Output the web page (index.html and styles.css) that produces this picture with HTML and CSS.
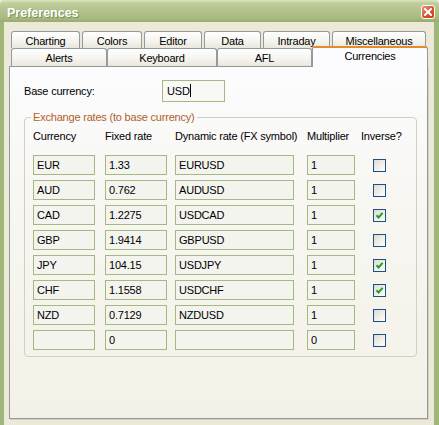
FILE: index.html
```html
<!DOCTYPE html>
<html lang="en">
<head>
    <meta charset="UTF-8">
    <title>Preferences</title>
    <link rel="stylesheet" href="styles.css">
</head>
<body>
    <div class="window">
        <div class="titlebar">
            <span class="title">Preferences</span>
            <span class="close">
                <svg width="8" height="8" viewBox="0 0 8 8"><path d="M1 1L7 7M7 1L1 7" stroke="#fff" stroke-width="2" stroke-linecap="square"/></svg>
            </span>
        </div>
        <div class="client">
            <div class="tab-row back">
                <div class="tab t-charting">Charting</div>
                <div class="tab t-colors">Colors</div>
                <div class="tab t-editor">Editor</div>
                <div class="tab t-data">Data</div>
                <div class="tab t-intraday">Intraday</div>
                <div class="tab t-misc">Miscellaneous</div>
            </div>
            <div class="tab-row front">
                <div class="tab t-alerts">Alerts</div>
                <div class="tab t-keyboard">Keyboard</div>
                <div class="tab t-afl">AFL</div>
                <div class="tab selected">Currencies</div>
            </div>
            <div class="page">
                <div class="base-row">
                    <span class="base-label">Base currency:</span>
                    <div class="edit base-edit">USD<span class="caret"></span></div>
                </div>
                <fieldset class="rates">
                    <legend>Exchange rates (to base currency)</legend>
                    <div class="rate-grid">
                        <span class="head">Currency</span>
                        <span class="head">Fixed rate</span>
                        <span class="head">Dynamic rate (FX symbol)</span>
                        <span class="head">Multiplier</span>
                        <span class="head">Inverse?</span>

                        <div class="edit cur">EUR</div><div class="edit fix">1.33</div><div class="edit dyn">EURUSD</div><div class="edit mul">1</div><span class="check"></span>
                        <div class="edit cur">AUD</div><div class="edit fix">0.762</div><div class="edit dyn">AUDUSD</div><div class="edit mul">1</div><span class="check"></span>
                        <div class="edit cur">CAD</div><div class="edit fix">1.2275</div><div class="edit dyn">USDCAD</div><div class="edit mul">1</div><span class="check on"><svg width="11" height="11" viewBox="0 0 11 11"><path d="M2.5 5.2L4.6 7.4L8.6 2.8" fill="none" stroke="#21a121" stroke-width="2"/></svg></span>
                        <div class="edit cur">GBP</div><div class="edit fix">1.9414</div><div class="edit dyn">GBPUSD</div><div class="edit mul">1</div><span class="check"></span>
                        <div class="edit cur">JPY</div><div class="edit fix">104.15</div><div class="edit dyn">USDJPY</div><div class="edit mul">1</div><span class="check on"><svg width="11" height="11" viewBox="0 0 11 11"><path d="M2.5 5.2L4.6 7.4L8.6 2.8" fill="none" stroke="#21a121" stroke-width="2"/></svg></span>
                        <div class="edit cur">CHF</div><div class="edit fix">1.1558</div><div class="edit dyn">USDCHF</div><div class="edit mul">1</div><span class="check on"><svg width="11" height="11" viewBox="0 0 11 11"><path d="M2.5 5.2L4.6 7.4L8.6 2.8" fill="none" stroke="#21a121" stroke-width="2"/></svg></span>
                        <div class="edit cur">NZD</div><div class="edit fix">0.7129</div><div class="edit dyn">NZDUSD</div><div class="edit mul">1</div><span class="check"></span>
                        <div class="edit cur"></div><div class="edit fix">0</div><div class="edit dyn"></div><div class="edit mul">0</div><span class="check"></span>
                    </div>
                </fieldset>
            </div>
        </div>
    </div>
</body>
</html>
```

FILE: styles.css
```css
*{
    box-sizing: border-box;
}
body{
    margin:0;
    background:#ece9d8;
    font-family:"Liberation Sans", Arial, sans-serif;
    font-size:11px;
    letter-spacing:-0.2px;
    color:#000;
}
.window{
    width:439px;
    height:425px;
    overflow:hidden;
    background:#ece9d8;
}
.titlebar{
    height:22px;
    display:flex;
    align-items:center;
    justify-content:space-between;
    padding:0 4px 0 7px;
    border-radius:5px 5px 0 0;
    background:linear-gradient(to bottom,#dce4bf 0%,#c0ce9c 14%,#b4c38d 45%,#aabb82 80%,#97ac70 100%);
}
.title{
    color:#fff;
    font-weight:bold;
    font-size:12.5px;
    letter-spacing:0;
    padding-top:3px;
    text-shadow:1px 1px 0 #7d8d5a;
}
.close{
    width:14px;
    height:14px;
    margin-top:1px;
    display:flex;
    align-items:center;
    justify-content:center;
    border:1px solid #fff;
    border-radius:3px;
    background:linear-gradient(135deg,#eb9a7c 0%,#d9562f 50%,#c4411b 100%);
}
.client{
    height:403px;
    border-left:4px solid #9fb779;
    border-right:5px solid #9fb779;
    padding:9px 6px 0 5px;
}

/* tabs */
.tab-row{
    display:flex;
    padding-left:2px;
}
.tab-row.back{
    height:17px;
    gap:2px;
}
.tab-row.front{
    height:18px;
}
.tab{
    border:1px solid #919b9c;
    border-bottom:none;
    border-radius:3px 3px 0 0;
    background:linear-gradient(to bottom,#ffffff 0%,#f5f4ef 55%,#e9e7dd 100%);
    text-align:center;
    line-height:14px;
    padding-top:2px;
    white-space:nowrap;
}
.t-charting{ width:69px; }
.t-colors{ width:60px; }
.t-editor{ width:58px; }
.t-data{ width:57px; }
.t-intraday{ width:67px; }
.t-misc{ width:94px; }
.t-alerts{ width:96px; }
.t-keyboard{ width:110px; }
.t-afl{ width:95px; }
.tab.selected{
    width:116px;
    height:21px;
    margin-top:-2px;
    position:relative;
    z-index:2;
    border-top:2px solid #e68b2c;
    background:#fcfcfe;
    padding-top:1px;
}

/* page */
.page{
    height:353px;
    border:1px solid #919b9c;
    background:linear-gradient(to bottom,#fcfcfe 0%,#f7f6f1 40%,#f3f1e7 100%);
    box-shadow:1px 1px 0 #d4d0c2;
    padding:13px 10px 0 14px;
}
.base-row{
    display:flex;
    align-items:center;
}
.base-label{
    width:138px;
}
.edit{
    height:20px;
    border:1px solid #a4b883;
    background:#f4f4ef;
    padding:0 0 0 3px;
    line-height:18px;
    white-space:nowrap;
    overflow:hidden;
}
.base-edit{
    width:63px;
    height:22px;
    line-height:20px;
    padding-left:4px;
    background:#f8f8f4;
}
.caret{
    display:inline-block;
    width:1px;
    height:13px;
    background:#000;
    vertical-align:-2px;
}
.rates{
    margin:9px 0 0 0;
    padding:6px 8px 6px 8px;
    border:1px solid #d0d0bf;
    border-radius:4px;
}
.rates legend{
    color:#b0602a;
    padding:0 2px;
    margin-left:-2px;
    line-height:13px;
}
.rate-grid{
    display:grid;
    grid-template-columns:72px 70px 132px 54px 1fr;
    grid-auto-rows:20px;
    row-gap:5px;
    align-items:center;
}
.head{
    line-height:13px;
    align-self:start;
    margin-bottom:7px;
}
.rate-grid .head{
    height:13px;
}
.cur{ width:62px; }
.fix{ width:62px; }
.dyn{ width:119px; }
.mul{ width:48px; }
.check{
    width:13px;
    height:13px;
    margin-left:12px;
    border:1px solid #1c5180;
    background:linear-gradient(135deg,#dcdcd7 0%,#ecebe6 45%,#ffffff 100%);
    display:flex;
    align-items:center;
    justify-content:center;
}
```
